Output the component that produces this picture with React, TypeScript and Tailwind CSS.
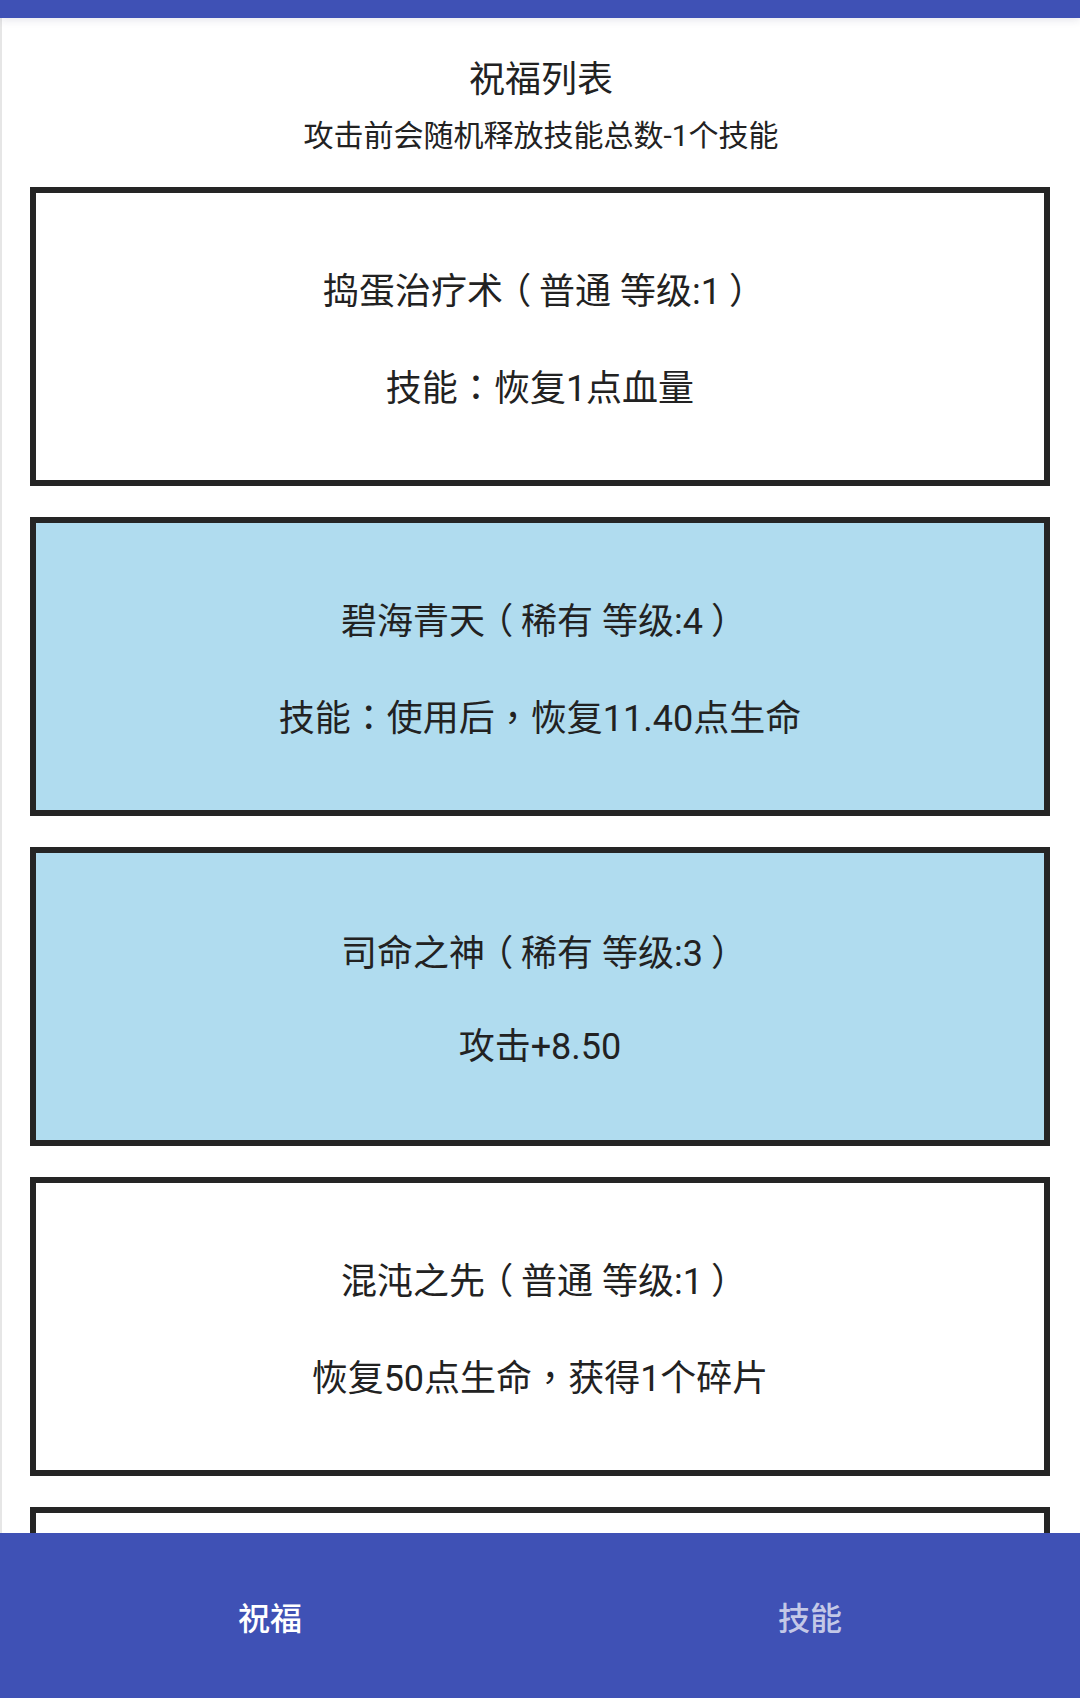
import React from "react";

type Bless = { name: string; rarity: string; level: number; desc: string; rare: boolean };

const items: Bless[] = [
  { name: "捣蛋治疗术", rarity: "普通", level: 1, desc: "技能：恢复1点血量", rare: false },
  { name: "碧海青天", rarity: "稀有", level: 4, desc: "技能：使用后，恢复11.40点生命", rare: true },
  { name: "司命之神", rarity: "稀有", level: 3, desc: "攻击+8.50", rare: true },
  { name: "混沌之先", rarity: "普通", level: 1, desc: "恢复50点生命，获得1个碎片", rare: false },
];

const font = { fontFamily: 'Roboto, "Noto Sans CJK SC", sans-serif' };
const tc = { fontFamily: '"Noto Sans CJK TC", sans-serif' };

type Seg = { s: string; adj: number; tc: boolean };

// Full-width punctuation drawn centred in its em box, as the original Android font does:
// parentheses are nudged with letter-spacing, colon and comma use the TC forms.
function T({ text }: { text: string }) {
  const chars = Array.from(text);
  const adj = chars.map(() => 0);
  chars.forEach((c, i) => {
    if (c === "（" && i > 0) {
      adj[i - 1] -= 1;
      adj[i] += 1;
    }
    if (c === "）" && i > 0) {
      adj[i - 1] += 1;
      adj[i] -= 1;
    }
  });
  const segs: Seg[] = [];
  chars.forEach((c, i) => {
    const isTc = c === "：" || c === "，";
    const last = segs[segs.length - 1];
    if (last && last.adj === adj[i] && last.tc === isTc) last.s += c;
    else segs.push({ s: c, adj: adj[i], tc: isTc });
  });
  return (
    <>
      {segs.map((g, i) => {
        const cls = g.adj < 0 ? "tracking-[-0.22em]" : g.adj > 0 ? "tracking-[0.22em]" : undefined;
        return (
          <span key={i} className={cls} style={g.tc ? tc : undefined}>
            {g.s}
          </span>
        );
      })}
    </>
  );
}

function Card({ b }: { b?: Bless }) {
  return (
    <div
      className={`shrink-0 h-[299px] border-[6px] border-[#252525] flex flex-col items-center justify-center gap-[45px] text-[36px] leading-[48px] text-[#222222] ${
        b && b.rare ? "bg-[#b0dcef]" : "bg-white"
      }`}
    >
      {b && (
        <>
          <div className="mt-[8px] whitespace-pre">
            <T text={`${b.name}（${b.rarity} 等级:${b.level}）`} />
          </div>
          <div className="whitespace-pre">
            <T text={b.desc} />
          </div>
        </>
      )}
    </div>
  );
}

export default function App() {
  return (
    <div className="w-[1080px] h-[1698px] flex flex-col bg-white overflow-hidden" style={font}>
      <div className="relative z-10 h-[18px] shrink-0 bg-[#3f51b5] shadow-[0_2px_8px_rgba(40,40,90,0.12)]" />
      <div className="flex-1 min-h-0 overflow-hidden border-l-[2px] border-[#e6e6e6] flex flex-col">
        <div className="pt-[38px] flex flex-col items-center text-[#222222]">
          <div className="text-[36px] leading-[48px]">祝福列表</div>
          <div className="mt-[12px] text-[30px] leading-[40px]">攻击前会随机释放技能总数-1个技能</div>
        </div>
        <div className="mt-[31px] pl-[28px] pr-[30px] flex flex-col gap-[31px]">
          {items.map((b, i) => (
            <Card key={i} b={b} />
          ))}
          <Card />
        </div>
      </div>
      <div className="h-[165px] shrink-0 bg-[#3f51b5] grid grid-cols-2 items-center">
        <div className="flex justify-center text-[32px] font-medium text-white pt-[6px]">祝福</div>
        <div className="flex justify-center text-[32px] font-medium text-white/70 pt-[6px]">技能</div>
      </div>
    </div>
  );
}
